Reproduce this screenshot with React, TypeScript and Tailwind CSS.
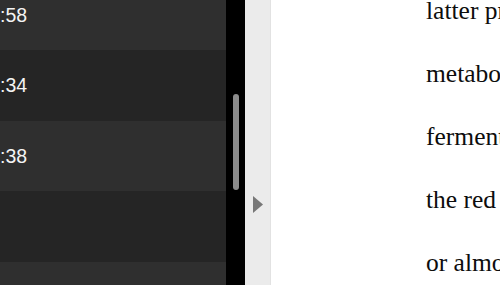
const rows = [
  { time: ":58", shade: "bg-[#2f2f2f]" },
  { time: ":34", shade: "bg-[#252525]" },
  { time: ":38", shade: "bg-[#2f2f2f]" },
  { time: "", shade: "bg-[#252525]" },
  { time: "", shade: "bg-[#2f2f2f]" },
];

const lines = ["latter pr", "metabolic", "fermentat", "the red w", "or almost"];

function TimeList() {
  return (
    <div className="flex w-[245px] shrink-0 h-full overflow-hidden">
      <div className="flex-1 flex flex-col mt-[-20.5px]">
        {rows.map((row, i) => (
          <div
            key={i}
            className={`${row.shade} h-[70.5px] shrink-0 flex items-center pt-[1px] text-[19.5px] text-[#f4f4f4] font-['Liberation_Sans',Arial,sans-serif]`}
          >
            {row.time}
          </div>
        ))}
      </div>
      <div className="w-[19px] shrink-0 bg-black flex flex-col items-center">
        <div className="mt-[94px] ml-[1px] w-[6px] h-[96px] rounded-full bg-[#8c8c8c]" />
      </div>
    </div>
  );
}

function Divider() {
  return (
    <div className="w-[26px] shrink-0 h-full bg-[#ebebeb] border-r border-[#e2e2e2] flex flex-col">
      <svg className="mt-[196px] ml-[8px]" width="10" height="17" viewBox="0 0 10 17">
        <path d="M0 0 L10 8.5 L0 17 Z" fill="#777777" />
      </svg>
    </div>
  );
}

function Page() {
  return (
    <div className="flex-1 h-full bg-white overflow-hidden">
      <div className="ml-[155px] mt-[-21.5px] whitespace-nowrap text-[25.5px] leading-[63px] text-[#0d0d0d] font-['Liberation_Serif','Times_New_Roman',serif]">
        {lines.map((l) => (
          <div key={l}>{l}</div>
        ))}
      </div>
    </div>
  );
}

export default function App() {
  return (
    <div className="w-[500px] h-[285px] flex overflow-hidden bg-white">
      <TimeList />
      <Divider />
      <Page />
    </div>
  );
}
